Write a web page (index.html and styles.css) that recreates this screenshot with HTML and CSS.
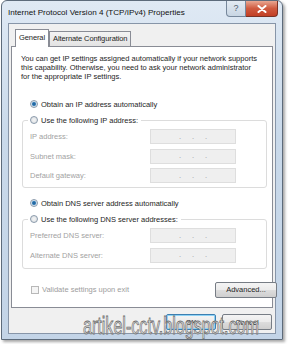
FILE: index.html
```html
<!DOCTYPE html>
<html lang="en">
<head>
  <meta charset="UTF-8" />
  <title>Internet Protocol Version 4 (TCP/IPv4) Properties</title>
  <link rel="stylesheet" href="styles.css">
</head>
<body>

  <!-- Dialog window -->
  <div class="window">

    <!-- Title bar with caption buttons -->
    <div class="titlebar">
      <span class="title">Internet Protocol Version 4 (TCP/IPv4) Properties</span>
      <div class="caption-buttons">
        <span class="btn-help">?</span>
        <span class="btn-close">
          <svg width="10" height="8" viewBox="0 0 10 8">
            <path d="M1.5 1 L8.5 7 M8.5 1 L1.5 7" stroke="#fff" stroke-width="2" stroke-linecap="round"/>
          </svg>
        </span>
      </div>
    </div>

    <div class="client">

      <!-- Tabs -->
      <div class="tabs">
        <div class="tab active">General</div>
        <div class="tab">Alternate Configuration</div>
      </div>

      <div class="panel">
        <p class="intro">You can get IP settings assigned automatically if your network supports<br>
          this capability. Otherwise, you need to ask your network administrator<br>
          for the appropriate IP settings.</p>

        <label class="option first"><span class="radio checked"></span>Obtain an IP address automatically</label>

        <fieldset class="group ip-group">
          <legend><span class="radio"></span>Use the following IP address:</legend>
          <div class="field"><span>IP address:</span><span class="ip-box"><i>.</i><i>.</i><i>.</i></span></div>
          <div class="field"><span>Subnet mask:</span><span class="ip-box"><i>.</i><i>.</i><i>.</i></span></div>
          <div class="field"><span>Default gateway:</span><span class="ip-box"><i>.</i><i>.</i><i>.</i></span></div>
        </fieldset>

        <label class="option"><span class="radio checked"></span>Obtain DNS server address automatically</label>

        <fieldset class="group dns-group">
          <legend><span class="radio"></span>Use the following DNS server addresses:</legend>
          <div class="field"><span>Preferred DNS server:</span><span class="ip-box"><i>.</i><i>.</i><i>.</i></span></div>
          <div class="field"><span>Alternate DNS server:</span><span class="ip-box"><i>.</i><i>.</i><i>.</i></span></div>
        </fieldset>

        <div class="validate-row">
          <label class="check"><span class="checkbox"></span>Validate settings upon exit</label>
          <button class="btn advanced">Advanced...</button>
        </div>
      </div>

      <!-- OK / Cancel -->
      <div class="dialog-buttons">
        <button class="btn default">OK</button>
        <button class="btn">Cancel</button>
      </div>
    </div>
  </div>

  <!-- Blog watermark over the screenshot -->
  <div class="watermark">artikel-cctv.blogspot.com</div>

</body>
</html>
```

FILE: styles.css
```css
/* Page */
body {
  margin: 0;
  width: 289px;
  height: 344px;
  background: #ffffff;
  font-family: 'Liberation Sans', 'Noto Sans', sans-serif;
  font-size: 7.5px;
  color: #1e1e1e;
  position: relative;
  overflow: hidden;
}

/* Window frame */
.window {
  margin: 0 0 0 1px;
  width: 282px;
  height: 340px;
  border: 1px solid #5d6b7b;
  border-radius: 6px 6px 0 0;
  background: linear-gradient(to bottom, #dfe9f4, #c9d9ea 40%, #c3d4e7);
  box-shadow: 2px 2px 3px rgba(0, 0, 0, 0.35);
  padding: 0 6px 0 6px;
  box-sizing: border-box;
}

.titlebar {
  height: 22px;
  display: flex;
  justify-content: space-between;
  align-items: flex-start;
}

.title {
  font-size: 8.1px;
  color: #111;
  padding-top: 7px;
}

.caption-buttons {
  display: flex;
  margin-right: -2px;
}

.btn-help {
  width: 18px;
  height: 15px;
  border: 1px solid #76879b;
  border-top: none;
  border-radius: 0 0 0 4px;
  background: linear-gradient(to bottom, #e3ebf3, #c8d5e3);
  color: #4f5f70;
  font-size: 9px;
  text-align: center;
  line-height: 15px;
}

.btn-close {
  width: 31px;
  height: 15px;
  border: 1px solid #7a3225;
  border-top: none;
  border-left: none;
  border-radius: 0 0 4px 0;
  background: linear-gradient(to bottom, #e9a792, #cf5a3f 50%, #c23f25);
  display: flex;
  align-items: center;
  justify-content: center;
}

/* Client area */
.client {
  height: 311px;
  background: #f0f0f0;
  border: 1px solid #8795a8;
  padding: 5px 2px 0 2px;
  box-sizing: border-box;
}

.tabs {
  display: flex;
  align-items: flex-end;
  padding-left: 4px;
  height: 17px;
  position: relative;
  z-index: 1;
}

.tab {
  height: 14px;
  padding: 0 3px;
  border: 1px solid #898c95;
  border-bottom: none;
  background: linear-gradient(to bottom, #f3f3f3, #e3e3e3);
  line-height: 14px;
  margin-left: -1px;
  letter-spacing: -0.1px;
}

.tab.active {
  height: 17px;
  line-height: 16px;
  background: #ffffff;
  padding: 0 3px;
  margin-left: 0;
  margin-right: 1px;
  position: relative;
  top: 1px;
}

.panel {
  background: #ffffff;
  border: 1px solid #898c95;
  height: 262px;
  box-sizing: border-box;
  padding: 7px 7px 0 9px;
}

.intro {
  margin: 0;
  line-height: 9px;
  white-space: nowrap;
}

/* Radio options */
.option,
.group legend,
.check {
  display: flex;
  align-items: center;
  height: 12px;
}

.option {
  margin: 17px 0 0 9px;
}

.group + .option {
  margin-top: 9px;
}

.radio {
  width: 6px;
  height: 6px;
  border: 1px solid #8a9aab;
  border-radius: 50%;
  background: radial-gradient(circle, #f4f4f4, #d8dde2);
  margin-right: 3px;
  flex-shrink: 0;
}

.radio.checked {
  background: radial-gradient(circle, #1c5a8e 0, #2f78b4 1.5px, #cfe0ee 2.5px, #e4ecf3 3px);
}

/* Group boxes */
.group {
  margin: 4px 0 0 1px;
  width: 245px;
  border: 1px solid #dcdcdc;
  border-radius: 3px;
  padding: 3px 0 4px 0;
  box-sizing: border-box;
}

.group legend {
  padding: 0 3px 0 2px;
  margin-left: 5px;
}

.dns-group {
  padding-bottom: 5px;
}

.field {
  display: flex;
  align-items: center;
  justify-content: space-between;
  height: 15px;
  padding: 0 30px 0 7px;
  color: #a2a2a2;
}

.field + .field {
  margin-top: 4.5px;
}

.ip-box {
  width: 86px;
  height: 15px;
  box-sizing: border-box;
  background: #efefef;
  border: 1px solid #dedede;
  display: flex;
  justify-content: space-evenly;
  padding: 0 17px;
  align-items: center;
}

.ip-box i {
  font-style: normal;
  color: #9a9a9a;
  line-height: 10px;
}

/* Validate checkbox and Advanced button */
.validate-row {
  display: flex;
  justify-content: space-between;
  align-items: center;
  margin: 13px 0 0 0;
  padding: 0 0 0 10px;
  width: 246px;
}

.check {
  color: #9d9d9d;
}

.checkbox {
  width: 6px;
  height: 6px;
  border: 1px solid #b8b8b8;
  background: #f5f5f5;
  margin-right: 3px;
}

.btn {
  font-family: inherit;
  font-size: 7.5px;
  color: #1e1e1e;
  height: 16px;
  padding: 0;
  border: 1px solid #777d85;
  border-radius: 2px;
  background: linear-gradient(to bottom, #f4f4f4 0, #ebebeb 50%, #dddddd 51%, #cfcfcf 100%);
}

.advanced {
  width: 62px;
}

.dialog-buttons {
  display: flex;
  justify-content: flex-end;
  gap: 6px;
  padding: 6px 1px 0 0;
}

.dialog-buttons .btn {
  width: 50px;
}

.btn.default {
  border-color: #3c7fb1;
  box-shadow: inset 0 0 0 1px #8ed2f5;
}

/* Watermark laid over the dialog */
.watermark {
  position: absolute;
  left: 83px;
  top: 313px;
  font-family: 'Liberation Sans', 'DejaVu Sans', sans-serif;
  font-size: 23px;
  color: #e6e6e6;
  -webkit-text-stroke: 0.8px #6c6c6c;
  transform: scaleX(0.7);
  transform-origin: left top;
  white-space: nowrap;
}
```
